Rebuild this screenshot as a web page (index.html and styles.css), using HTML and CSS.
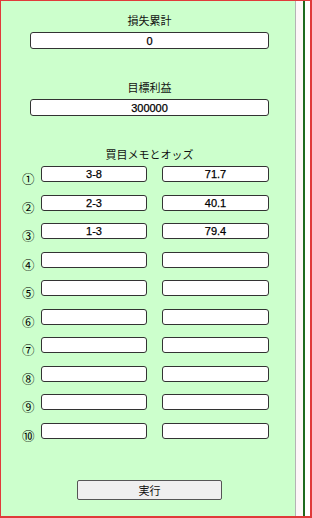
FILE: index.html
```html
<!DOCTYPE html>
<html lang="ja">
<head>
  <meta charset="UTF-8" />
  <meta name="viewport" content="width=device-width, initial-scale=1.0" />
  <title>計算</title>
  <link rel="stylesheet" href="styles.css">
</head>
<body>
  <div class="frame">
    <div class="panel">
      <div class="block">
        <div class="label">損失累計</div>
        <input class="wide" type="text" value="0" />
      </div>
      <div class="block">
        <div class="label">目標利益</div>
        <input class="wide" type="text" value="300000" />
      </div>
      <div class="block">
        <div class="label">買目メモとオッズ</div>
      </div>
      <div class="rows">
        <span class="num">①</span><input type="text" value="3-8" /><input type="text" value="71.7" />
        <span class="num">②</span><input type="text" value="2-3" /><input type="text" value="40.1" />
        <span class="num">③</span><input type="text" value="1-3" /><input type="text" value="79.4" />
        <span class="num">④</span><input type="text" /><input type="text" />
        <span class="num">⑤</span><input type="text" /><input type="text" />
        <span class="num">⑥</span><input type="text" /><input type="text" />
        <span class="num">⑦</span><input type="text" /><input type="text" />
        <span class="num">⑧</span><input type="text" /><input type="text" />
        <span class="num">⑨</span><input type="text" /><input type="text" />
        <span class="num">⑩</span><input type="text" /><input type="text" />
      </div>
      <div class="actions">
        <button type="button">実行</button>
      </div>
    </div>
    <div class="gutter"></div>
    <div class="rule"></div>
    <div class="edge"></div>
  </div>
</body>
</html>
```

FILE: styles.css
```css
* { box-sizing: border-box; }
body { margin: 0; font-family: "Noto Sans CJK JP", "Liberation Sans", sans-serif; color: #111; }
.frame { display: flex; width: 312px; height: 518px; border: 1px solid #e03a3a; border-right-width: 2px; border-bottom-width: 2px; background: #fff; }
.panel { width: 294px; background: #ccffcc; padding-top: 12px; }
.gutter { width: 8px; border-left: 1px solid #b4b4b4; background: #fdf7f8; }
.rule { width: 2px; background: #1e6a1e; }
.edge { flex: 1; background: #fff; }

.block { width: 239px; margin-left: 29px; margin-bottom: 31px; }
.label { font-size: 11px; line-height: 14px; text-align: center; margin-bottom: 5px; }

input { display: block; height: 17px; padding: 0 2px; border: 1px solid #333; border-radius: 3px; background: #fff; font-family: "Liberation Sans", Arial, sans-serif; font-size: 11px; text-align: center; color: #000; -webkit-text-stroke: 0.25px #000; }
input.wide { width: 239px; }

.rows { display: grid; grid-template-columns: 20px 121px 107px; grid-auto-rows: 16px; row-gap: 12.5px; margin: -26px 0 0 20px; }
.rows .num { height: 16px; font-size: 12.5px; line-height: 25px; padding-left: 1px; white-space: nowrap; color: #000; }
.rows input { width: 107px; height: 16px; }
.rows .num + input { width: 106px; }

.actions { padding: 41.5px 0 0 76px; }
button { display: block; width: 145px; height: 20px; padding: 0; border: 1px solid #555; border-radius: 2px; background: #efefef; font-family: "Noto Sans CJK JP", sans-serif; font-size: 11px; color: #111; }
```
